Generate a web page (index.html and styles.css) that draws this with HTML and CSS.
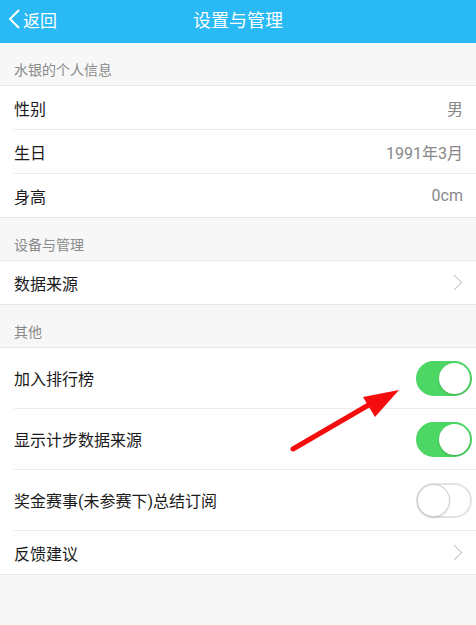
FILE: index.html
```html
<!DOCTYPE html>
<html>
    <head>
        <meta charset="utf-8">
        <title>设置与管理</title>
        <link rel="stylesheet" href="styles.css">
    </head>
    <body>
        <div class="page">
            <div class="topbar">
                <a class="back">
                    <svg width="14" height="20" viewBox="0 0 14 20"><polyline points="12,1 3,10 12,19" fill="none" stroke="#fff" stroke-width="2"/></svg>
                    <span>返回</span>
                </a>
                <div class="title">设置与管理</div>
            </div>

            <div class="group-title">水银的个人信息</div>
            <ul class="group">
                <li class="row"><span class="label">性别</span><span class="value">男</span></li>
                <li class="row"><span class="label">生日</span><span class="value">1991年3月</span></li>
                <li class="row"><span class="label">身高</span><span class="value">0cm</span></li>
            </ul>

            <div class="group-title">设备与管理</div>
            <ul class="group">
                <li class="row"><span class="label">数据来源</span><span class="arrow"></span></li>
            </ul>

            <div class="group-title">其他</div>
            <ul class="group">
                <li class="row tall"><span class="label">加入排行榜</span><span class="switch on"></span></li>
                <li class="row tall"><span class="label">显示计步数据来源</span><span class="switch on"></span></li>
                <li class="row tall"><span class="label">奖金赛事(未参赛下)总结订阅</span><span class="switch"></span></li>
                <li class="row"><span class="label">反馈建议</span><span class="arrow"></span></li>
            </ul>

            <svg class="mark" width="476" height="625" viewBox="0 0 476 625">
                <line x1="293" y1="449" x2="372" y2="403" stroke="#f50d0d" stroke-width="5" stroke-linecap="round"/>
                <polygon points="399,390 363,397 375,417" fill="#f50d0d"/>
            </svg>
        </div>
    </body>
</html>
```
FILE: styles.css
```css
*{
    padding: 0;
    margin: 0;
    box-sizing: border-box;
}
body {
    background-color: #f7f7f7;
    font-family: Roboto, "Noto Sans CJK SC", sans-serif;
}
.page {
    position: relative;
    width: 476px;
    height: 625px;
    overflow: hidden;
}
.topbar {
    height: 43px;
    background-color: #29b9f4;
    position: relative;
    display: flex;
    align-items: center;
    justify-content: center;
    color: #fff;
}
.back {
    position: absolute;
    left: 7px;
    top: 0;
    height: 38px;
    display: flex;
    align-items: center;
    font-size: 17px;
}
.back svg {
    margin-right: 2px;
}
.title {
    font-size: 18px;
    margin-top: -5px;
}
.group-title {
    height: 43px;
    padding: 17px 14px 0;
    font-size: 14px;
    line-height: 20px;
    color: #8a8a8a;
    border-bottom: 1px solid #e8e8e8;
}
.group {
    list-style: none;
    background-color: #fff;
    padding-left: 14px;
    border-bottom: 1px solid #e8e8e8;
}
.row {
    height: 44px;
    display: flex;
    align-items: center;
    justify-content: space-between;
    padding-right: 13px;
    border-bottom: 1px solid #ececec;
    font-size: 16px;
    color: #1a1a1a;
}
.row:last-child {
    border-bottom: 0;
    height: 43px;
}
.row.tall {
    height: 61px;
    padding-right: 4px;
}
.value {
    color: #888;
}
.arrow {
    width: 11px;
    height: 11px;
    border-top: 1.5px solid #c4c4c4;
    border-right: 1.5px solid #c4c4c4;
    transform: rotate(45deg);
    margin-right: 3px;
}
.switch {
    width: 56px;
    height: 35px;
    border-radius: 18px;
    border: 2px solid #e3e3e3;
    background-color: #fff;
    position: relative;
}
.switch::after {
    content: "";
    position: absolute;
    top: 0;
    left: 0;
    width: 31px;
    height: 31px;
    border-radius: 50%;
    background-color: #fff;
    box-shadow: 0 0 0 1px #cfcfcf, 0 1px 3px rgba(0,0,0,0.25);
}
.switch.on {
    background-color: #4cd664;
    border-color: #4cd664;
}
.switch.on::after {
    left: 21px;
    box-shadow: 0 1px 2px rgba(0,0,0,0.2);
}
.mark {
    position: absolute;
    left: 0;
    top: 0;
    pointer-events: none;
}
```
